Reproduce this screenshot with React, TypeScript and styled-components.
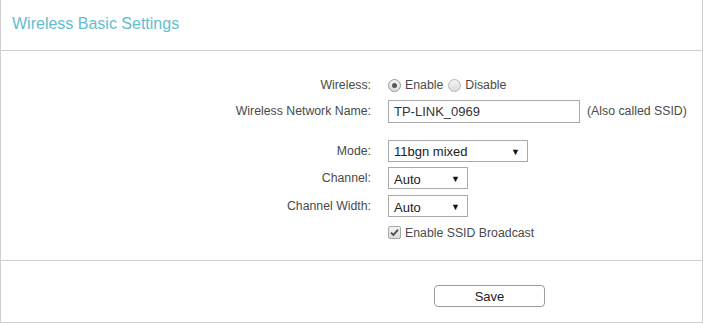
import React from "react";
import styled, { createGlobalStyle } from "styled-components";

const GlobalStyle = createGlobalStyle`
  html, body {
    margin: 0;
    padding: 0;
    background: #fff;
  }
  body {
    font-family: "Liberation Sans", Arial, sans-serif;
    color: #333;
  }
`;

const Panel = styled.div`
  width: 701px;
  border-left: 1px solid #cfcfcf;
  border-right: 1px solid #cfcfcf;
  border-bottom: 1px solid #cfcfcf;
  box-sizing: content-box;
`;

const Header = styled.div`
  height: 51px;
  border-bottom: 1px solid #cfcfcf;
  display: flex;
  align-items: center;
  padding-left: 11px;
  padding-bottom: 2px;
  box-sizing: border-box;
  & h2 {
    margin: 0;
    font-size: 16px;
    font-weight: normal;
    color: #62bdd0;
  }
`;

const Body = styled.div`
  padding: 21px 0 15px;
  border-bottom: 1px solid #cfcfcf;
`;

const Row = styled.div<{ $h: number }>`
  display: grid;
  grid-template-columns: 370px 1fr;
  column-gap: 17px;
  align-items: center;
  height: ${(p) => p.$h}px;
  font-size: 12.3px;
`;

const Spacer = styled.div`
  height: 13px;
`;

const Label = styled.div`
  text-align: right;
  color: #4a4a4a;
`;

const Controls = styled.div`
  display: flex;
  align-items: center;
`;

const Radio = styled.span<{ $on?: boolean }>`
  width: 11px;
  height: 11px;
  border-radius: 50%;
  border: 1px solid ${(p) => (p.$on ? "#9a9a9a" : "#b5b5b5")};
  background: linear-gradient(#f4f4f4, #dcdcdc);
  display: inline-flex;
  align-items: center;
  justify-content: center;
  margin-right: 4px;
  &::after {
    content: "";
    width: 5px;
    height: 5px;
    border-radius: 50%;
    background: ${(p) => (p.$on ? "#5a5a5a" : "transparent")};
  }
`;

const Option = styled.span`
  color: #4a4a4a;
  margin-right: 5px;
`;

const TextBox = styled.div`
  width: 192px;
  height: 23px;
  box-sizing: border-box;
  border: 1px solid #a9a9a9;
  font-size: 13px;
  color: #333;
  padding-left: 5px;
  display: flex;
  align-items: center;
  margin-right: 7px;
`;

const Hint = styled.span`
  color: #4a4a4a;
`;

const Dropdown = styled.div<{ $w: number }>`
  width: ${(p) => p.$w}px;
  height: 22px;
  box-sizing: border-box;
  border: 1px solid #a9a9a9;
  display: flex;
  align-items: center;
  justify-content: space-between;
  padding: 2px 7px 0 5px;
  font-size: 13px;
  color: #222;
  & i {
    font-style: normal;
    font-size: 9px;
    color: #111;
  }
`;

const CheckBox = styled.span`
  width: 11px;
  height: 11px;
  border: 1px solid #a8a8a8;
  border-radius: 2px;
  background: linear-gradient(#f4f4f4, #dcdcdc);
  display: inline-flex;
  align-items: center;
  justify-content: center;
  margin-right: 4px;
`;

const Footer = styled.div`
  height: 61px;
  padding: 24px 0 0 433px;
  box-sizing: border-box;
`;

const Button = styled.button`
  width: 111px;
  height: 22px;
  border: 1px solid #9c9c9c;
  border-radius: 4px;
  background: #fff;
  font-family: "Liberation Sans", Arial, sans-serif;
  font-size: 13px;
  color: #222;
  padding: 0;
  cursor: pointer;
`;

const Select = ({ value, width }: { value: string; width: number }) => (
  <Dropdown $w={width}>
    <span>{value}</span>
    <i>▼</i>
  </Dropdown>
);

export default function App() {
  return (
    <>
      <GlobalStyle />
      <Panel>
        <Header>
          <h2>Wireless Basic Settings</h2>
        </Header>
        <Body>
          <Row $h={26}>
            <Label>Wireless:</Label>
            <Controls>
              <Radio $on />
              <Option>Enable</Option>
              <Radio />
              <Option>Disable</Option>
            </Controls>
          </Row>
          <Row $h={26}>
            <Label>Wireless Network Name:</Label>
            <Controls>
              <TextBox>TP-LINK_0969</TextBox>
              <Hint>(Also called SSID)</Hint>
            </Controls>
          </Row>
          <Spacer />
          <Row $h={27}>
            <Label>Mode:</Label>
            <Controls>
              <Select value="11bgn mixed" width={140} />
            </Controls>
          </Row>
          <Row $h={28}>
            <Label>Channel:</Label>
            <Controls>
              <Select value="Auto" width={80} />
            </Controls>
          </Row>
          <Row $h={28}>
            <Label>Channel Width:</Label>
            <Controls>
              <Select value="Auto" width={80} />
            </Controls>
          </Row>
          <Row $h={25}>
            <span />
            <Controls>
              <CheckBox>
                <svg width="9" height="9" viewBox="0 0 9 9">
                  <path d="M1 4.6 L3.4 7 L8 1.6" fill="none" stroke="#4a4a4a" strokeWidth="1.8" />
                </svg>
              </CheckBox>
              <Option>Enable SSID Broadcast</Option>
            </Controls>
          </Row>
        </Body>
        <Footer>
          <Button>Save</Button>
        </Footer>
      </Panel>
    </>
  );
}
